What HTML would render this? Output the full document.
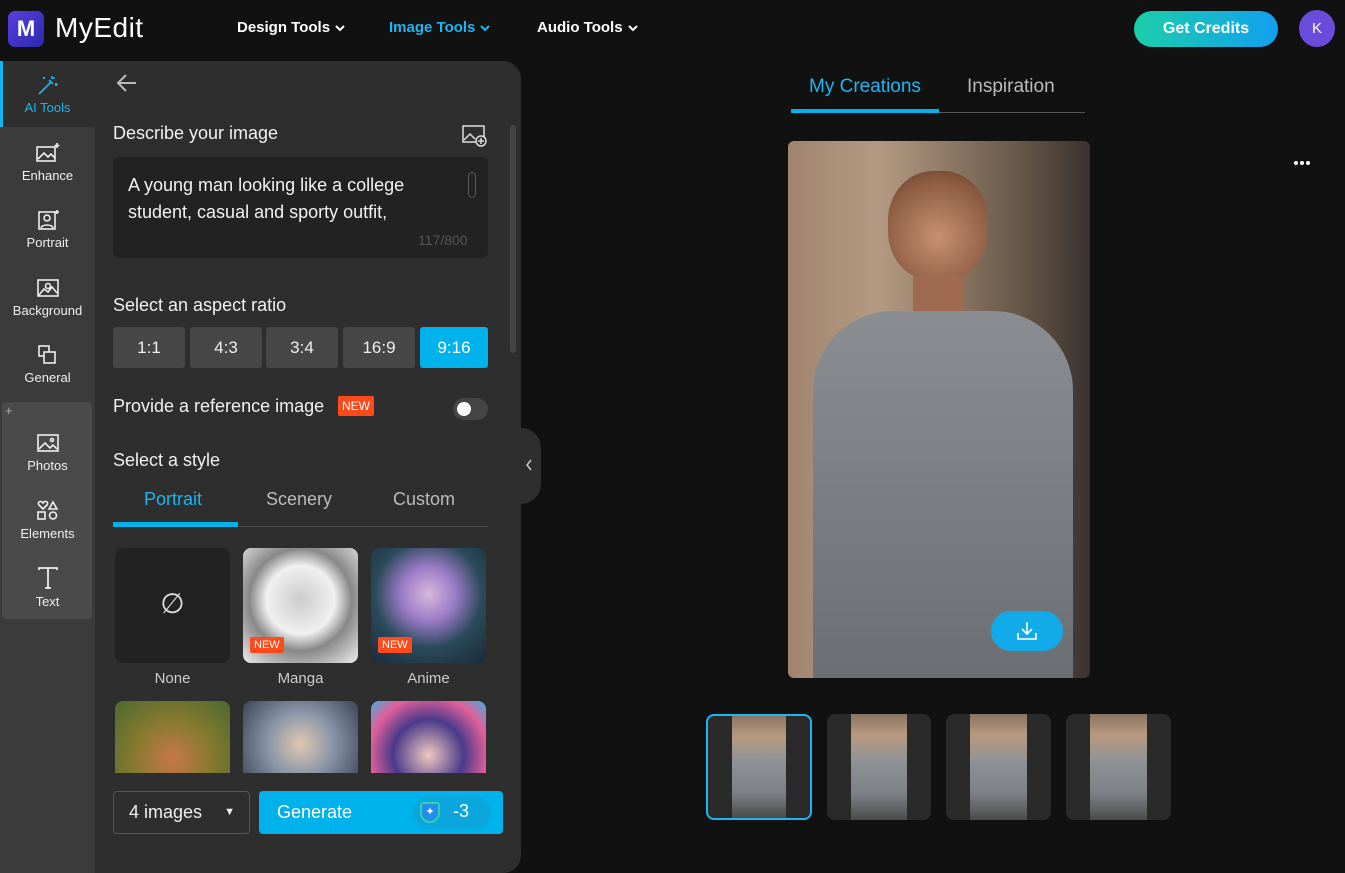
<!DOCTYPE html>
<html><head><meta charset="utf-8"><style>
*{box-sizing:border-box;margin:0;padding:0}
body{width:1345px;height:873px;background:#111;font-family:"Liberation Sans",sans-serif;color:#fff;position:relative;overflow:hidden}
.a{position:absolute}
.nav{font-size:15px;font-weight:bold;top:19px}
.nav svg{vertical-align:middle;margin-left:4px}
.side{left:0;top:61px;width:95px;height:812px;background:#3b3b3b}
.it{position:absolute;left:0;width:95px;text-align:center;font-size:13px;color:#eee}
.it svg{display:block;margin:0 auto 4px}
.panel{left:95px;top:61px;width:426px;height:812px;background:#2e2e2e;border-top-right-radius:18px;border-bottom-right-radius:18px}
.lbl{font-size:18px;color:#f0f0f0}
.ar{position:absolute;top:327px;height:41px;width:72px;background:#474747;border-radius:3px;text-align:center;line-height:41px;font-size:17px;color:#eee}
.th{position:absolute;top:548px;width:115px;height:115px;border-radius:8px}
.cap{position:absolute;top:670px;width:115px;text-align:center;font-size:15px;color:#ccc}
.new{position:absolute;background:#ff4a1c;color:#fff;font-size:11px;padding:2px 4px;border-radius:2px}
.tb{position:absolute;top:714px;height:106px;background:#2a2a2a;border-radius:8px;overflow:hidden}
.tb div{position:absolute;left:24px;right:24px;top:0;bottom:0;background:linear-gradient(180deg,#8a7563 0%,#b89a7e 20%,#8e9297 45%,#7d8187 75%,#4a4a4a 100%)}
</style></head><body>
<!-- header -->
<div class="a" style="left:8px;top:11px;width:36px;height:36px;border-radius:7px;background:linear-gradient(135deg,#5a3ee0,#2b2aa8);font-weight:bold;font-size:22px;text-align:center;line-height:36px">M</div>
<div class="a" style="left:55px;top:12px;font-size:28px;letter-spacing:0.5px">MyEdit</div>
<div class="a nav" style="left:237px">Design Tools<svg width="12" height="8" viewBox="0 0 12 8" fill="none" stroke="#fff" stroke-width="2"><path d="M2 2l4 4 4-4"/></svg></div>
<div class="a nav" style="left:389px;color:#1cb6f0">Image Tools<svg width="12" height="8" viewBox="0 0 12 8" fill="none" stroke="#1cb6f0" stroke-width="2"><path d="M2 2l4 4 4-4"/></svg></div>
<div class="a nav" style="left:537px">Audio Tools<svg width="12" height="8" viewBox="0 0 12 8" fill="none" stroke="#fff" stroke-width="2"><path d="M2 2l4 4 4-4"/></svg></div>
<div class="a" style="left:1134px;top:11px;width:144px;height:36px;border-radius:18px;background:linear-gradient(90deg,#1bcfa8,#12a0f0);text-align:center;line-height:36px;font-weight:bold;font-size:16px">Get Credits</div>
<div class="a" style="left:1299px;top:10px;width:36px;height:37px;border-radius:50%;background:#6a4bdc;text-align:center;line-height:37px;font-size:15px">K</div>
<!-- sidebar -->
<div class="a side"></div>
<div class="a" style="left:0;top:61px;width:95px;height:66px;background:#2e2e2e;border-left:3px solid #12b4ef"></div>
<div class="it" style="top:74px;color:#1cb6f0"><svg width="24" height="22" viewBox="0 0 24 22" fill="none" stroke="#1cb6f0" stroke-width="1.6"><path d="M3 20L15 8M13 6l4 4M16 2v3M19 4h-3M20 9v3M22 10.5h-3M8 3v2M9 4H7"/></svg>AI Tools</div>
<div class="it" style="top:142px"><svg width="26" height="22" viewBox="0 0 26 22" fill="none" stroke="#eee" stroke-width="1.6"><rect x="2" y="5" width="18" height="14"/><path d="M3 17l6-6 4 4 3-3 4 4M22 1v5M19.5 3.5h5"/></svg>Enhance</div>
<div class="it" style="top:209px"><svg width="26" height="22" viewBox="0 0 26 22" fill="none" stroke="#eee" stroke-width="1.6"><rect x="4" y="3" width="16" height="17"/><circle cx="12" cy="9" r="3"/><path d="M6 19c1-4 11-4 12 0M22 1v4M20 3h4"/></svg>Portrait</div>
<div class="it" style="top:277px"><svg width="26" height="22" viewBox="0 0 26 22" fill="none" stroke="#eee" stroke-width="1.6"><rect x="3" y="3" width="20" height="16"/><circle cx="13" cy="9" r="2.5"/><path d="M4 18l5-6 4 3 4-5 5 6"/></svg>Background</div>
<div class="it" style="top:344px"><svg width="26" height="22" viewBox="0 0 26 22" fill="none" stroke="#eee" stroke-width="1.6"><rect x="4" y="2" width="10" height="10"/><rect x="9" y="8" width="11" height="11" fill="#3b3b3b"/></svg>General</div>
<div class="a" style="left:2px;top:402px;width:90px;height:217px;background:#4a4a4a;border-radius:4px"></div>
<div class="a" style="left:5px;top:403px;color:#aaa;font-size:13px">+</div>
<div class="it" style="top:432px"><svg width="26" height="22" viewBox="0 0 26 22" fill="none" stroke="#eee" stroke-width="1.6"><rect x="3" y="3" width="20" height="16"/><path d="M4 17l6-6 5 5 3-3 4 4"/><circle cx="17" cy="8" r="1.5"/></svg>Photos</div>
<div class="it" style="top:500px"><svg width="26" height="22" viewBox="0 0 26 22" fill="none" stroke="#eee" stroke-width="1.6"><path d="M8 9L4 5a2 2 0 013-3l1 1 1-1a2 2 0 013 3zM18 2l4 7h-8z"/><rect x="3" y="12" width="7" height="7"/><circle cx="18" cy="15.5" r="3.5"/></svg>Elements</div>
<div class="it" style="top:566px"><svg width="26" height="24" viewBox="0 0 26 24" fill="none" stroke="#eee" stroke-width="1.8"><path d="M4 4V2h18v2M13 2v20M10 22h6"/></svg>Text</div>
<!-- panel -->
<div class="a panel"></div>
<svg class="a" style="left:116px;top:73px" width="22" height="20" viewBox="0 0 22 20" fill="none" stroke="#bbb" stroke-width="2"><path d="M20 10H3M10 2L2 10l8 8"/></svg>
<div class="a" style="left:510px;top:125px;width:6px;height:228px;background:#444;border-radius:3px"></div>
<div class="a lbl" style="left:113px;top:123px">Describe your image</div>
<svg class="a" style="left:462px;top:124px" width="26" height="24" viewBox="0 0 26 24" fill="none" stroke="#ddd" stroke-width="1.5"><rect x="1" y="2" width="21" height="16"/><path d="M2 16l6-6 5 5"/><circle cx="19" cy="17" r="5" fill="#2e2e2e"/><path d="M19 14v6M16 17h6"/></svg>
<div class="a" style="left:113px;top:157px;width:375px;height:101px;background:#222;border-radius:6px"></div>
<div class="a" style="left:128px;top:172px;font-size:18px;line-height:27px;color:#f2f2f2;width:330px">A young man looking like a college student, casual and sporty outfit,</div>
<div class="a" style="left:468px;top:172px;width:8px;height:26px;border:1px solid #555;border-radius:4px"></div>
<div class="a" style="left:418px;top:232px;font-size:14px;color:#555">117/800</div>
<div class="a lbl" style="left:113px;top:295px">Select an aspect ratio</div>
<div class="ar" style="left:113px">1:1</div>
<div class="ar" style="left:190px">4:3</div>
<div class="ar" style="left:266px">3:4</div>
<div class="ar" style="left:343px">16:9</div>
<div class="ar" style="left:420px;width:68px;background:#00b2ec;color:#fff">9:16</div>
<div class="a lbl" style="left:113px;top:396px">Provide a reference image</div>
<div class="new" style="left:338px;top:396px;font-size:12px;padding:3px 4px">NEW</div>
<div class="a" style="left:453px;top:398px;width:35px;height:22px;border-radius:11px;background:#454545"></div>
<div class="a" style="left:457px;top:402px;width:14px;height:14px;border-radius:50%;background:#fff"></div>
<div class="a lbl" style="left:113px;top:450px">Select a style</div>
<div class="a" style="left:144px;top:489px;font-size:18px;color:#1cb6f0">Portrait</div>
<div class="a" style="left:266px;top:489px;font-size:18px;color:#bbb">Scenery</div>
<div class="a" style="left:393px;top:489px;font-size:18px;color:#bbb">Custom</div>
<div class="a" style="left:113px;top:526px;width:375px;height:1px;background:#4a4a4a"></div>
<div class="a" style="left:113px;top:522px;width:125px;height:5px;background:#00b2ec"></div>
<div class="th" style="left:115px;background:#222;text-align:center;line-height:112px;font-size:28px;color:#ddd">&#8709;</div>
<div class="th" style="left:243px;background:radial-gradient(circle at 50% 45%,#ccc,#f0f0f0 40%,#888 60%,#eee)"></div>
<div class="th" style="left:371px;background:radial-gradient(circle at 50% 40%,#d8b8d8,#9b7bc8 30%,#2a4a5a 60%,#1a2a3a)"></div>
<div class="new" style="left:250px;top:637px">NEW</div>
<div class="new" style="left:378px;top:637px">NEW</div>
<div class="cap" style="left:115px">None</div>
<div class="cap" style="left:243px">Manga</div>
<div class="cap" style="left:371px">Anime</div>
<div class="a" style="left:115px;top:701px;width:115px;height:72px;border-radius:8px 8px 0 0;background:radial-gradient(circle at 50% 80%,#c87848,#8a7a30 45%,#4a6a30)"></div>
<div class="a" style="left:243px;top:701px;width:115px;height:72px;border-radius:8px 8px 0 0;background:radial-gradient(circle at 50% 60%,#e0c8b0,#8a96a8 45%,#3a4658)"></div>
<div class="a" style="left:371px;top:701px;width:115px;height:72px;border-radius:8px 8px 0 0;background:radial-gradient(circle at 50% 75%,#f0c8c0,#4a3a8a 45%,#e0609a 75%,#40b0e0)"></div>
<div class="a" style="left:113px;top:791px;width:137px;height:43px;border:1px solid #555;border-radius:4px;font-size:18px;line-height:41px;padding-left:15px;color:#eee">4 images<span style="position:absolute;right:14px;font-size:11px">&#9660;</span></div>
<div class="a" style="left:259px;top:791px;width:244px;height:43px;background:#00b2ec;border-radius:4px"></div>
<div class="a" style="left:277px;top:802px;font-size:18px">Generate</div>
<div class="a" style="left:413px;top:796px;width:78px;height:33px;border-radius:17px;background:#0aa6dc"></div>
<div class="a" style="left:420px;top:802px;width:20px;height:21px;border-radius:3px 3px 10px 10px;background:#1e8ee8;border:2px solid #2ed0b0;text-align:center;font-size:11px;line-height:17px">&#10022;</div>
<div class="a" style="left:453px;top:801px;font-size:18px">-3</div>
<!-- collapse tab -->
<div class="a" style="left:515px;top:428px;width:26px;height:76px;background:#2e2e2e;border-radius:0 20px 20px 0"></div>
<svg class="a" style="left:525px;top:458px" width="8" height="14" viewBox="0 0 8 14" fill="none" stroke="#ccc" stroke-width="1.5"><path d="M6 2L2 7l4 5"/></svg>
<!-- main -->
<div class="a" style="left:809px;top:76px;font-size:19px;color:#1cb6f0">My Creations</div>
<div class="a" style="left:967px;top:76px;font-size:19px;color:#bbb">Inspiration</div>
<div class="a" style="left:791px;top:112px;width:294px;height:1px;background:#555"></div>
<div class="a" style="left:791px;top:109px;width:148px;height:4px;background:#00b2ec"></div>
<div class="a" style="left:1294px;top:161px;width:4px;height:4px;border-radius:50%;background:#fff"></div>
<div class="a" style="left:1300px;top:161px;width:4px;height:4px;border-radius:50%;background:#fff"></div>
<div class="a" style="left:1306px;top:161px;width:4px;height:4px;border-radius:50%;background:#fff"></div>
<div class="a" style="left:788px;top:141px;width:302px;height:537px;border-radius:6px;overflow:hidden;background:linear-gradient(90deg,#a08470 0%,#b49a82 30%,#6a5a4a 75%,#3a3230 100%)">
 <div class="a" style="left:100px;top:30px;width:100px;height:110px;border-radius:45%;background:radial-gradient(circle at 50% 60%,#c89070,#8a5a40 70%,#5a3a28)"></div>
 <div class="a" style="left:125px;top:135px;width:50px;height:45px;background:#a06a50"></div>
 <div class="a" style="left:25px;top:170px;width:260px;height:380px;border-radius:80px 80px 0 0;background:linear-gradient(180deg,#8a8e92,#777b80 60%,#6a6e72)"></div>
</div>
<div class="a" style="left:991px;top:611px;width:72px;height:40px;border-radius:20px;background:#12aae8"></div>
<svg class="a" style="left:1015px;top:620px" width="24" height="22" viewBox="0 0 24 22" fill="none" stroke="#fff" stroke-width="1.6"><path d="M12 2v12M7 9l5 5 5-5M3 13v6h18v-6"/></svg>
<div class="tb" style="left:706px;width:106px;border:2px solid #1cb6f0"><div></div></div>
<div class="tb" style="left:827px;width:104px"><div></div></div>
<div class="tb" style="left:946px;width:105px"><div></div></div>
<div class="tb" style="left:1066px;width:105px"><div></div></div>
</body></html>
